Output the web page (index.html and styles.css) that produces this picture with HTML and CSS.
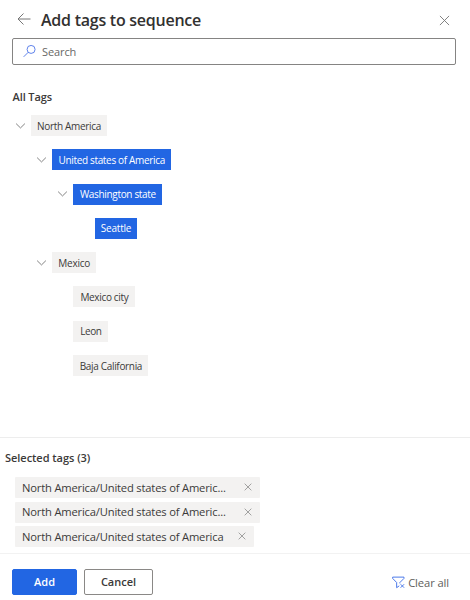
FILE: index.html
```html
<!DOCTYPE html>
<html lang="en">
<head>
<meta charset="utf-8">
<title>Add tags to sequence</title>
<link rel="stylesheet" href="styles.css">
</head>
<body>
<svg class="defs" width="0" height="0">
  <symbol id="chevron" viewBox="0 0 12 8"><path d="M1.2 1.4 6 6.1l4.8-4.7"/></symbol>
  <symbol id="cross" viewBox="0 0 12 12"><path d="M1 1l10 10M11 1 1 11"/></symbol>
</svg>
<main class="panel">
  <header class="header">
    <svg class="back" viewBox="0 0 14 12"><path d="M13.5 6H1M6.5.5 1 6l5.500 5.500"/></svg>
    <h1 class="title">Add tags to sequence</h1>
    <svg class="close"><use href="#cross"/></svg>
  </header>
  <div class="search">
    <svg class="search-icon" viewBox="0 0 14 14"><circle cx="8.700" cy="5.300" r="4.300"/><path d="M5.600 8.400.7 13.300"/></svg>
    <span class="placeholder">Search</span>
  </div>
  <h2 class="heading">All Tags</h2>
  <ul class="tree">
    <li class="node level-0"><svg class="chevron"><use href="#chevron"/></svg><span class="tag w-north">North America</span></li>
    <li class="node level-1"><svg class="chevron"><use href="#chevron"/></svg><span class="tag selected w-usa">United states of America</span></li>
    <li class="node level-2"><svg class="chevron"><use href="#chevron"/></svg><span class="tag selected w-wash">Washington state</span></li>
    <li class="node level-3"><span class="chevron"></span><span class="tag selected w-seattle">Seattle</span></li>
    <li class="node level-1"><svg class="chevron"><use href="#chevron"/></svg><span class="tag w-mexico">Mexico</span></li>
    <li class="node level-2"><span class="chevron"></span><span class="tag w-city">Mexico city</span></li>
    <li class="node level-2"><span class="chevron"></span><span class="tag w-leon">Leon</span></li>
    <li class="node level-2"><span class="chevron"></span><span class="tag w-baja">Baja California</span></li>
  </ul>
  <section class="picked">
    <h2 class="picked-title">Selected tags (3)</h2>
    <div class="pill"><span>North America/United states of Americ...</span><svg class="remove"><use href="#cross"/></svg></div>
    <div class="pill"><span>North America/United states of Americ...</span><svg class="remove"><use href="#cross"/></svg></div>
    <div class="pill short"><span>North America/United states of America</span><svg class="remove"><use href="#cross"/></svg></div>
  </section>
  <footer class="footer">
    <button class="button primary">Add</button>
    <button class="button">Cancel</button>
    <div class="clear">
      <svg class="filter" viewBox="0 0 14 13"><path d="M.7.7h12.200v1.400L8.500 6.500v1M.7.7v1.400L5 6.500v5.600l2.800-2M9.300 8.400l3.700 3.700M13 8.400l-3.700 3.700"/></svg>
      <span>Clear all</span>
    </div>
  </footer>
</main>
</body>
</html>
```
FILE: styles.css
```css
* { box-sizing: border-box; }
body {
  margin: 0;
  background: #fff;
  color: #3b3a39;
  font-family: "Open Sans", "Noto Sans", sans-serif;
}
svg { fill: none; stroke: #777; stroke-width: 1; flex: none; }
.defs { position: absolute; }
h1, h2, ul { margin: 0; padding: 0; }
.panel { display: flex; flex-direction: column; width: 470px; height: 600px; overflow: hidden; }
.header { display: flex; align-items: center; height: 38px; padding: 2px 20px 0 17px; }
.back { width: 14px; height: 12px; margin-top: -3px; }
.title { margin-left: 10px; font-size: 16px; line-height: 22px; font-weight: 600; letter-spacing: -0.25px; color: #323130; white-space: nowrap; }
.close { width: 11px; height: 11px; margin-left: auto; }
.search { display: flex; align-items: center; height: 27px; margin: 0 14px 0 12px; padding-left: 10px; border: 1px solid #858483; border-radius: 2px; }
.search-icon { width: 13px; height: 14px; margin-top: -1px; stroke: #5278e8; }
.placeholder { margin-left: 6px; font-size: 11px; letter-spacing: -0.1px; color: #686766; }
.heading { margin: 24px 0 0 12.500px; font-size: 11px; line-height: 15px; font-weight: 600; letter-spacing: -0.1px; }
.tree { margin-top: 11px; list-style: none; }
.node { display: flex; align-items: center; height: 21px; margin-bottom: 13.3px; padding-left: 15px; }
.level-1 { padding-left: 36.200px; }
.level-2 { padding-left: 57.400px; }
.level-3 { padding-left: 79px; }
.chevron { width: 11px; height: 8px; margin-right: 5px; flex: none; }
.tag { display: flex; align-items: center; justify-content: center; height: 21px; background: #f3f2f1; font-size: 10px; letter-spacing: -0.33px; white-space: nowrap; }
.selected { background: #2266e3; color: #fff; }
.w-north { width: 76px; }
.w-usa { width: 119px; }
.w-wash { width: 89px; }
.w-seattle { width: 42px; letter-spacing: -0.2px; }
.w-mexico { width: 44px; letter-spacing: -0.2px; }
.w-city { width: 62px; }
.w-leon { width: 35px; letter-spacing: -0.4px; }
.w-baja { width: 75px; }
.picked { margin-top: auto; height: 116px; border-top: 1px solid #ededed; padding: 12px 0 0 5px; }
.picked-title { margin-bottom: 11px; font-size: 11px; line-height: 16px; font-weight: 600; letter-spacing: -0.04px; }
.pill { display: flex; align-items: center; justify-content: space-between; width: 245px; height: 21px; margin: 0 0 3.500px 10px; padding: 0 8px 1px 7px; border-radius: 1px; background: #f3f2f1; font-size: 11.200px; letter-spacing: -0.18px; white-space: nowrap; }
.short { width: 239px; }
.remove { width: 8px; height: 8px; }
.footer { display: flex; align-items: flex-start; height: 47px; padding: 15px 21px 0 12px; border-top: 1px solid #f2f2f2; }
.button { width: 69px; height: 26px; margin: 0; padding: 0 0 1px; border: 1px solid #8a8886; border-radius: 2px; background: #fff; color: #3b3a39; font: 600 11px "Open Sans", sans-serif; }
.primary { width: 65px; margin-right: 7px; border-color: #2266e3; background: #2266e3; color: #fff; }
.clear { display: flex; align-items: center; gap: 3px; height: 26px; margin-left: auto; font-size: 11.200px; letter-spacing: -0.1px; color: #605e5c; white-space: nowrap; }
.filter { width: 13px; height: 13px; stroke: #3f6fe8; }
```
